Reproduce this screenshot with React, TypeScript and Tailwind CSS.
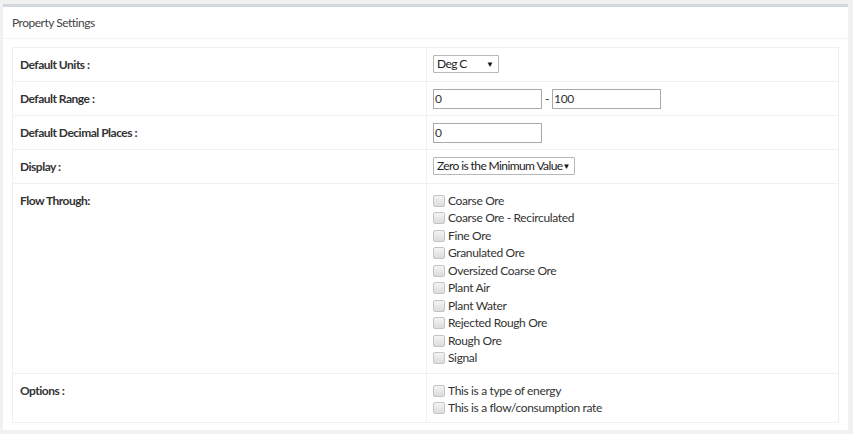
import React from "react";

const flow = [
  "Coarse Ore",
  "Coarse Ore - Recirculated",
  "Fine Ore",
  "Granulated Ore",
  "Oversized Coarse Ore",
  "Plant Air",
  "Plant Water",
  "Rejected Rough Ore",
  "Rough Ore",
  "Signal",
];

function Box() {
  return (
    <span className="inline-block w-[12px] h-[12px] mr-[3px] rounded-[2px] border border-[#c4c4c4] bg-gradient-to-b from-[#f4f4f4] to-[#dcdcdc] shrink-0" />
  );
}

function Check({ label }: { label: string }) {
  return (
    <div className="flex items-center h-[17.5px] whitespace-nowrap">
      <Box />
      <span>{label}</span>
    </div>
  );
}

function Select({ value, w }: { value: string; w: string }) {
  return (
    <div
      className={`flex items-center justify-between whitespace-nowrap h-[18px] border border-[#b8b8b8] rounded-[1px] bg-white pl-[3px] pr-[4px] text-[12px] tracking-[-0.6px] text-[#222] ${w}`}
    >
      <span>{value}</span>
      <span className="text-[8px] text-[#111] tracking-normal">▼</span>
    </div>
  );
}

function Input({ value }: { value: string }) {
  return (
    <div className="flex items-center h-[20px] w-[109px] border border-[#a9a9a9] bg-white pl-[1px] text-[12px] text-[#333]">
      {value}
    </div>
  );
}

function Row({
  label,
  children,
  h,
  last,
}: {
  label: string;
  children: React.ReactNode;
  h: string;
  last?: boolean;
}) {
  return (
    <div className={`flex ${h} ${last ? "" : "border-b border-[#f0f0f0]"}`}>
      <div className="w-[414px] shrink-0 border-r border-[#f0f0f0] pl-[7px] pt-[8px] text-[12px] tracking-[-0.5px] font-bold text-[#333] leading-[17px]">
        {label}
      </div>
      <div className="flex-1 pl-[6px] pt-[7px]">{children}</div>
    </div>
  );
}

export default function App() {
  return (
    <div
      className="w-[853px] h-[434px] bg-[#f1f1f1] pt-[4px] pl-[3px]"
      style={{ fontFamily: "Lato, 'Noto Sans', sans-serif" }}
    >
      <div className="w-[845px] h-[426px] bg-white border-t-[3px] border-[#d2d6de]">
        <div className="h-[32px] border-b border-[#f4f4f4] pl-[9px] pt-[1px] flex items-center text-[12px] tracking-[-0.5px] text-[#444]">
          Property Settings
        </div>
        <div className="px-[9px] pt-[8px]">
          <div className="border border-[#f0f0f0] h-[376px] text-[12px] tracking-[-0.35px] text-[#333]">
            <Row label="Default Units :" h="h-[34px]">
              <Select value="Deg C" w="w-[66px]" />
            </Row>
            <Row label="Default Range :" h="h-[34px]">
              <div className="flex items-center">
                <Input value="0" />
                <span className="mx-[3px] text-[12px]">-</span>
                <Input value="100" />
              </div>
            </Row>
            <Row label="Default Decimal Places :" h="h-[34px]">
              <Input value="0" />
            </Row>
            <Row label="Display :" h="h-[34px]">
              <Select value="Zero is the Minimum Value" w="w-[142px]" />
            </Row>
            <Row label="Flow Through:" h="h-[190px]">
              <div className="pt-[1px]">
                {flow.map((f) => (
                  <Check key={f} label={f} />
                ))}
              </div>
            </Row>
            <Row label="Options :" h="h-[48px]" last>
              <div className="pt-[1px]">
                <Check label="This is a type of energy" />
                <Check label="This is a flow/consumption rate" />
              </div>
            </Row>
          </div>
        </div>
      </div>
    </div>
  );
}
